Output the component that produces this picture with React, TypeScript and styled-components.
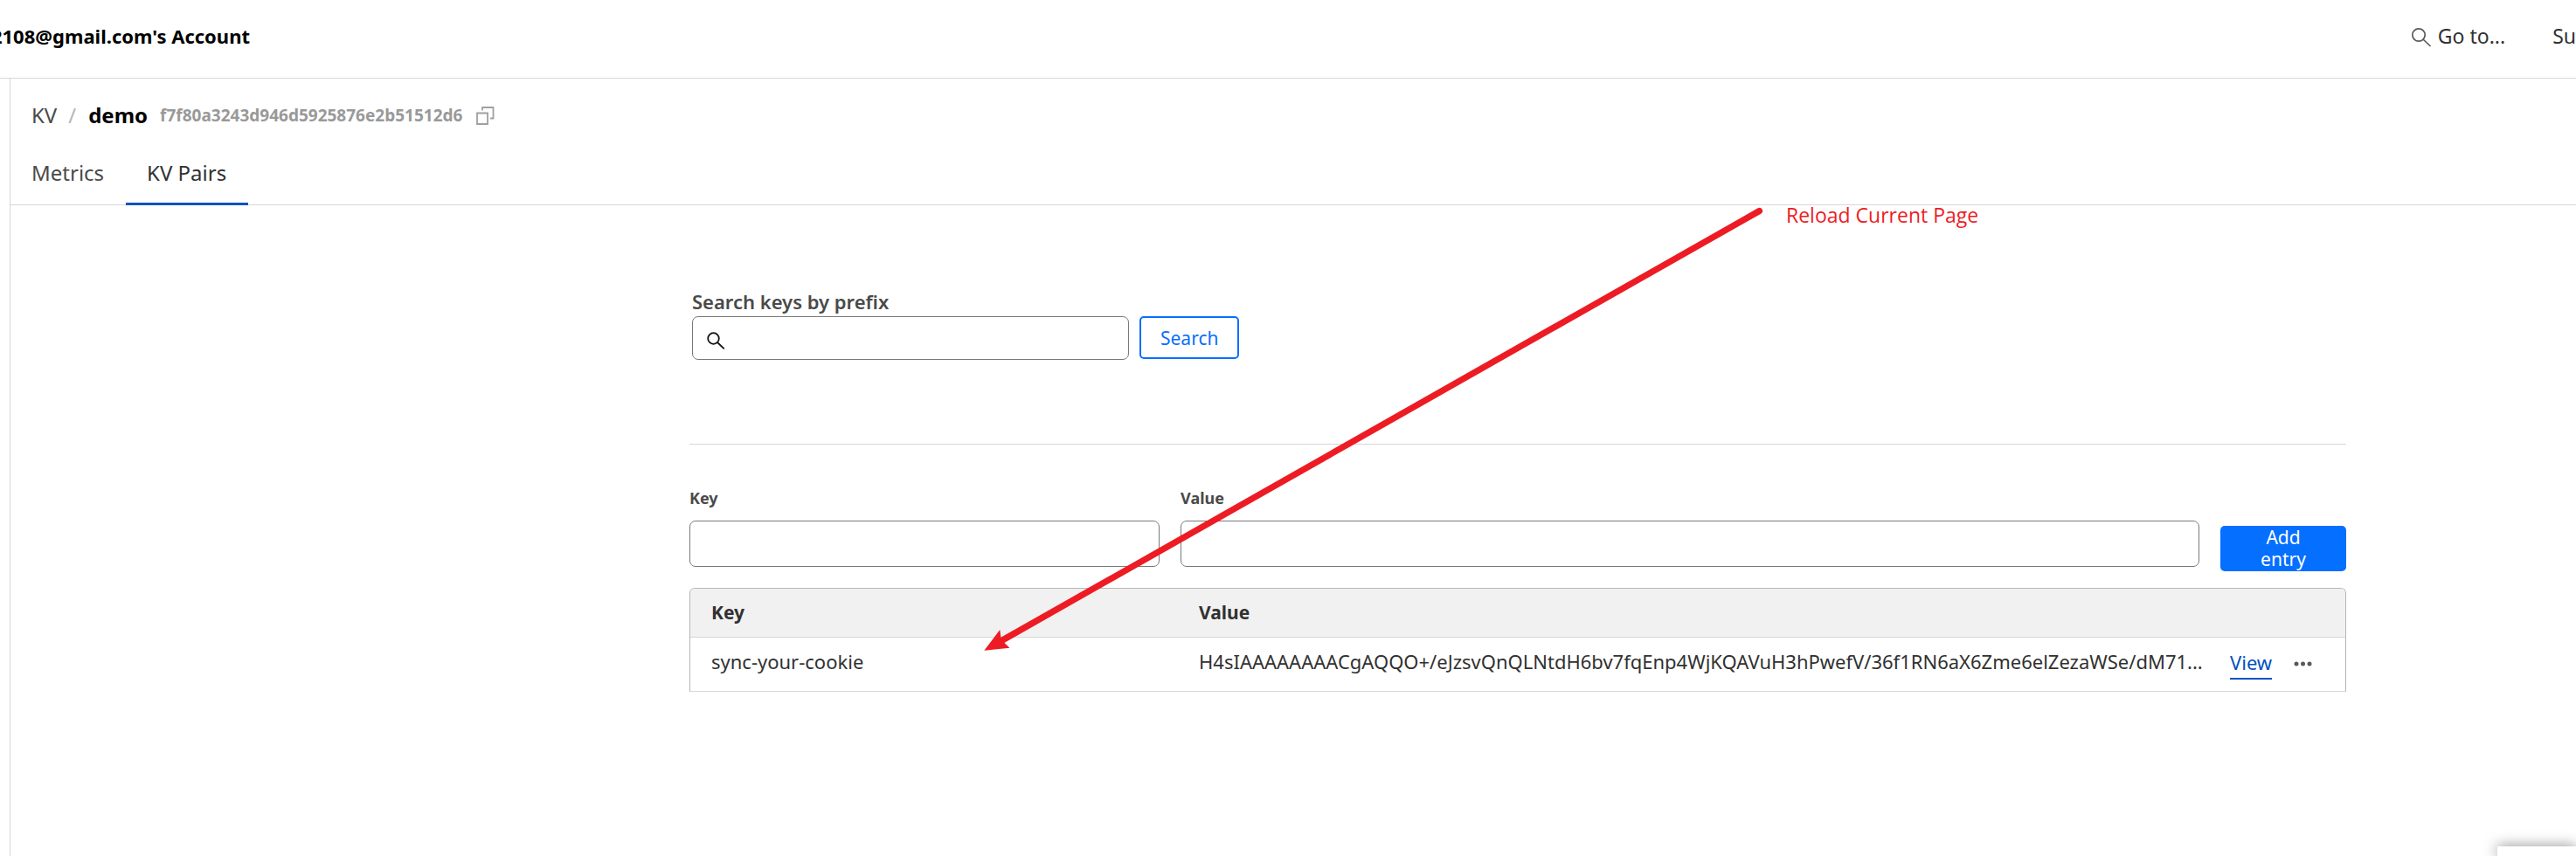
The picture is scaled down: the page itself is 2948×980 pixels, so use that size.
import React from 'react';
import styled, { createGlobalStyle } from 'styled-components';

const GlobalStyle = createGlobalStyle`
  * { box-sizing: border-box; }
  body {
    margin: 0;
    background: #fff;
    color: #313131;
    font-family: "Noto Sans", "Open Sans", sans-serif;
    font-size: 22px;
    line-height: 30px;
    overflow-x: hidden;
  }
  button, input { font: inherit; }
`;

const Page = styled.div`
  position: relative;
  display: flex;
  flex-direction: column;
  min-height: 100vh;
  overflow: hidden;
`;

const Header = styled.header`
  display: flex;
  align-items: center;
  justify-content: space-between;
  height: 90px;
  padding-bottom: 8px;
  border-bottom: 1px solid #d5d7d8;
  white-space: nowrap;
`;

const AccountName = styled.strong`
  display: flex;
  justify-content: flex-end;
  width: 286px;
  color: #000;
  font-weight: 700;
`;

const HeaderActions = styled.nav`
  display: flex;
  gap: 54px;
  font-size: 23px;
`;

const HeaderButton = styled.button`
  display: flex;
  align-items: center;
  gap: 7px;
  padding: 0;
  border: 0;
  background: none;
  color: #313131;

  svg { margin-top: 4px; }
`;

const HeaderLink = styled.a`
  color: #313131;
  text-decoration: none;
`;

const Body = styled.div`
  display: flex;
  flex: 1;
`;

const Sidebar = styled.aside`
  width: 12px;
  border-right: 1px solid #d5d7d8;
`;

const Main = styled.main`
  flex: 1;
  min-width: 0;
`;

const Breadcrumb = styled.div`
  display: flex;
  align-items: center;
  height: 84px;
  padding-left: 24px;
  font-size: 24px;
`;

const CrumbLink = styled.a`
  color: #4a4a4a;
  text-decoration: none;
`;

const Slash = styled.span`
  padding: 0 14px 0 13px;
  color: #b6b6b6;
`;

const Title = styled.h1`
  margin: 0;
  color: #000;
  font-size: 24px;
  font-weight: 700;
`;

const NamespaceId = styled.span`
  margin-left: 14px;
  color: #999;
  font-size: 19px;
  font-weight: 700;
`;

const IconButton = styled.button`
  display: flex;
  padding: 0;
  border: 0;
  background: none;
  color: #a0a0a0;
`;

const CopyButton = styled(IconButton)`
  margin-left: 16px;
`;

const Tabs = styled.nav`
  display: flex;
  height: 61px;
  border-bottom: 1px solid #d5d7d8;
`;

const Tab = styled.a<{ $active?: boolean }>`
  height: 61px;
  padding: 9px 25px 0 24px;
  border-bottom: ${p => (p.$active ? '3px solid #0051c3' : '0')};
  color: ${p => (p.$active ? '#313131' : '#4a4a4a')};
  font-size: 24px;
  text-decoration: none;
`;

const Content = styled.div`
  padding: 95px 263px 0 777px;
`;

const SearchForm = styled.form`
  display: grid;
  grid-template-columns: minmax(0, 500px) auto;
  justify-content: start;
  column-gap: 12px;
  padding: 0 0 96px 3px;
`;

const SearchLabel = styled.label`
  grid-column: 1 / -1;
  padding-bottom: 2px;
  color: #4a4a4a;
  font-weight: 600;
`;

const SearchField = styled.div`
  display: flex;
  align-items: center;
  height: 50px;
  padding: 6px 16px 0;
  border: 1px solid #797979;
  border-radius: 7px;
  color: #111;
`;

const SearchInput = styled.input`
  flex: 1;
  min-width: 0;
  margin-left: 8px;
  padding: 0;
  border: 0;
  outline: 0;
  background: none;
`;

const SearchButton = styled.button`
  height: 49px;
  padding: 0 22px;
  border: 2px solid #056fff;
  border-radius: 5px;
  background: #fff;
  color: #056fff;
  font-size: 21px;
  line-height: 40px;
`;

const Divider = styled.hr`
  margin: 0 0 49px;
  border: 0;
  border-top: 1px solid #d5d7d8;
`;

const EntryForm = styled.form`
  display: grid;
  grid-template-columns: minmax(0, 6fr) minmax(0, 13fr) 144px;
  column-gap: 24px;
  align-items: end;
  margin-bottom: 19px;
`;

const Field = styled.div`
  display: flex;
  flex-direction: column;
  padding-bottom: 5px;
`;

const FieldLabel = styled.label`
  margin-bottom: 14px;
  color: #4a4a4a;
  font-size: 18px;
  font-weight: 700;
  line-height: 24px;
`;

const TextInput = styled.input`
  width: 100%;
  height: 53px;
  padding: 0 12px;
  border: 1px solid #797979;
  border-radius: 7px;
  background: #fff;
`;

const AddButton = styled.button`
  height: 52px;
  padding: 0 36px;
  border: 0;
  border-radius: 5px;
  background: #056fff;
  color: #fff;
  font-size: 21px;
  line-height: 25px;
`;

const PairsTable = styled.table`
  width: 100%;
  table-layout: fixed;
  border: 1px solid #b6b6b6;
  border-bottom-color: #d5d7d8;
  border-radius: 6px 6px 0 0;
  border-spacing: 0;
  overflow: hidden;
`;

const Col = styled.col<{ $width?: number }>`
  width: ${p => (p.$width ? `${p.$width}px` : 'auto')};
`;

const HeadCell = styled.th`
  height: 56px;
  padding: 0 24px 2px;
  border-bottom: 1px solid #d5d7d8;
  background: #f1f1f1;
  font-size: 21px;
  font-weight: 700;
  text-align: left;
`;

const Cell = styled.td`
  height: 61px;
  padding: 0 0 7px 24px;
  overflow: hidden;
  white-space: nowrap;
`;

const Actions = styled.div`
  display: flex;
  align-items: center;
  gap: 25px;
  padding-top: 6px;
`;

const ViewLink = styled.a`
  padding-bottom: 3px;
  border-bottom: 2px solid #0051c3;
  color: #0051c3;
  text-decoration: none;
`;

const MoreButton = styled(IconButton)`
  color: #595959;
`;

const ChatPanel = styled.aside`
  position: absolute;
  right: 0;
  bottom: 0;
  width: 90px;
  height: 11px;
  background: #fff;
  box-shadow: 0 0 16px rgba(0, 0, 0, 0.5);
`;

const Arrow = styled.svg`
  position: absolute;
  left: 1120px;
  top: 230px;
  pointer-events: none;
`;

const Note = styled.span`
  position: absolute;
  left: 2044px;
  top: 231px;
  color: #ed1c24;
  font-family: "Open Sans", sans-serif;
  font-size: 23px;
  white-space: nowrap;
`;

const rows = [
  {
    key: 'sync-your-cookie',
    value:
      'H4sIAAAAAAAACgAQQO+/eJzsvQnQLNtdH6bv7fqEnp4WjKQAVuH3hPwefV/36f1RN6aX6Zme6elZezaWSe/dM71...',
  },
];

export default function App() {
  return (
    <>
      <GlobalStyle />
      <Page>
        <Header>
          <AccountName>2108@gmail.com's Account</AccountName>
          <HeaderActions>
            <HeaderButton type="button">
              <svg width="24" height="24" viewBox="0 0 24 24" fill="none" stroke="#595959" strokeWidth="1.7">
                <circle cx="9" cy="9" r="7.2" />
                <path d="M14 14l8.5 8" />
              </svg>
              Go to...
            </HeaderButton>
            <HeaderLink href="#support">Su</HeaderLink>
          </HeaderActions>
        </Header>
        <Body>
          <Sidebar />
          <Main>
            <Breadcrumb>
              <CrumbLink href="#kv">KV</CrumbLink>
              <Slash>/</Slash>
              <Title>demo</Title>
              <NamespaceId>f7f80a3243d946d5925876e2b51512d6</NamespaceId>
              <CopyButton type="button" aria-label="Copy namespace id">
                <svg width="21" height="21" viewBox="0 0 21 21" fill="none" stroke="currentColor" strokeWidth="1.8">
                  <path d="M1 7.500h12v12.500H1z" />
                  <path d="M7 4.500V1h12.500v12.500H16" />
                </svg>
              </CopyButton>
            </Breadcrumb>
            <Tabs>
              <Tab href="#metrics">Metrics</Tab>
              <Tab href="#pairs" $active>KV Pairs</Tab>
            </Tabs>
            <Content>
              <SearchForm>
                <SearchLabel htmlFor="prefix">Search keys by prefix</SearchLabel>
                <SearchField>
                  <svg width="21" height="21" viewBox="0 0 21 21" fill="none" stroke="currentColor" strokeWidth="1.8">
                    <circle cx="7.500" cy="7.500" r="6.300" />
                    <path d="M12 12l7.800 7.300" />
                  </svg>
                  <SearchInput id="prefix" type="text" />
                </SearchField>
                <SearchButton type="button">Search</SearchButton>
              </SearchForm>
              <Divider />
              <EntryForm>
                <Field>
                  <FieldLabel htmlFor="entry-key">Key</FieldLabel>
                  <TextInput id="entry-key" type="text" />
                </Field>
                <Field>
                  <FieldLabel htmlFor="entry-value">Value</FieldLabel>
                  <TextInput id="entry-value" type="text" />
                </Field>
                <AddButton type="button">Add entry</AddButton>
              </EntryForm>
              <PairsTable>
                <colgroup>
                  <Col $width={558} />
                  <Col />
                  <Col $width={156} />
                </colgroup>
                <thead>
                  <tr>
                    <HeadCell scope="col">Key</HeadCell>
                    <HeadCell scope="col">Value</HeadCell>
                    <HeadCell scope="col" aria-label="Actions" />
                  </tr>
                </thead>
                <tbody>
                  {rows.map(row => (
                    <tr key={row.key}>
                      <Cell>{row.key}</Cell>
                      <Cell>{row.value}</Cell>
                      <Cell>
                        <Actions>
                          <ViewLink href="#view">View</ViewLink>
                          <MoreButton type="button" aria-label="More actions">
                            <svg width="22" height="6" viewBox="0 0 22 6" fill="currentColor">
                              <circle cx="3" cy="3" r="2.500" />
                              <circle cx="10.500" cy="3" r="2.500" />
                              <circle cx="18" cy="3" r="2.500" />
                            </svg>
                          </MoreButton>
                        </Actions>
                      </Cell>
                    </tr>
                  ))}
                </tbody>
              </PairsTable>
            </Content>
          </Main>
        </Body>
        <Arrow width="900" height="520" viewBox="1120 230 900 520" aria-hidden="true">
          <path d="M1148 732.500L2013.500 241.500" stroke="#ed1c24" strokeWidth="7.200" strokeLinecap="round" />
          <path d="M1126.300 744.700L1144.300 721L1145.500 730L1149.500 736L1155.500 741.700Z" fill="#ed1c24" />
        </Arrow>
        <Note>Reload Current Page</Note>
        <ChatPanel />
      </Page>
    </>
  );
}
